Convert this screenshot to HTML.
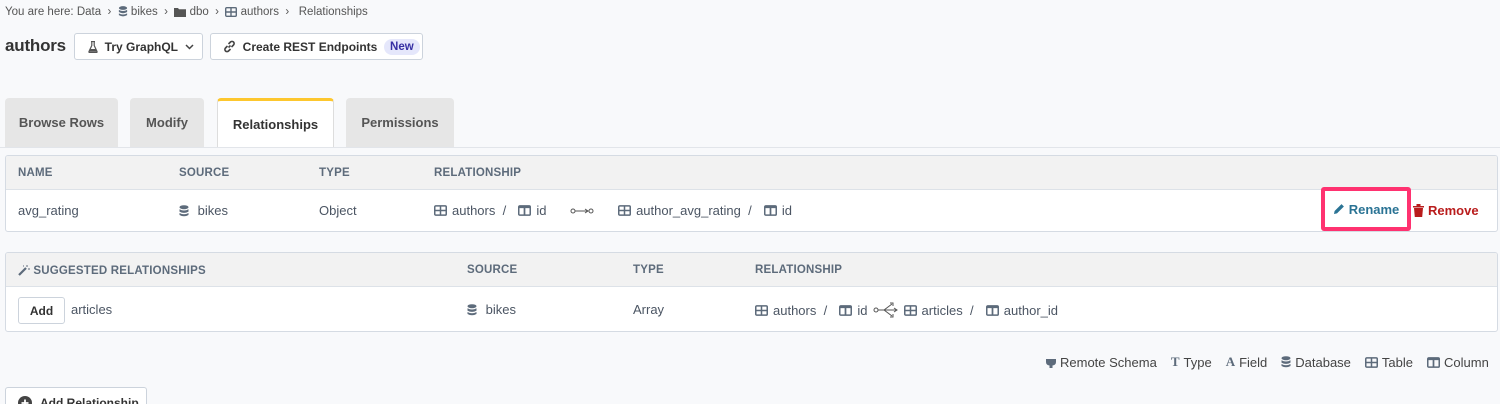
<!DOCTYPE html>
<html style="height:404px;overflow:hidden"><head><style>
*{box-sizing:border-box;margin:0;padding:0}
body{width:1500px;height:404px;overflow:hidden;background:#f8f9fb;font-family:"Liberation Sans",sans-serif;color:#4b5563;position:relative}
.a{position:absolute;white-space:nowrap}
.bc{font-size:11.5px;color:#555;top:6px;left:5px}
.btn{position:absolute;background:#fff;border:1px solid #ccd3dc;border-radius:3px;font-size:12px;font-weight:bold;color:#333;display:flex;align-items:center}
.tab{position:absolute;top:98px;height:49px;background:#e6e6e6;border-radius:4px 4px 0 0;font-size:13px;font-weight:bold;color:#555;display:flex;align-items:center;justify-content:center}
.tbl{position:absolute;left:5px;width:1493px;border:1px solid #d5dbe3;border-radius:3px;background:#fff;overflow:hidden}
.hd{background:#f2f2f2;border-bottom:1px solid #dde2e8;height:34px;position:relative}
.h{position:absolute;top:11px;font-size:11.5px;font-weight:bold;color:#5d6b7b;letter-spacing:.2px}
.c{position:absolute;font-size:13px;color:#4b5563;display:flex;align-items:center;gap:5px}
.ic{display:inline-block;vertical-align:middle}
.lg{font-size:13px;color:#444;display:flex;align-items:center;gap:4px}
</style></head><body>
<svg width="0" height="0" style="position:absolute"><defs>
<symbol id="tb" viewBox="0 0 12 10"><rect x=".7" y=".7" width="10.6" height="8.6" rx="1" fill="none" stroke="#5d6b7b" stroke-width="1.4"/><path d="M1 5h10M6 1v8" stroke="#5d6b7b" stroke-width="1.4"/></symbol>
<symbol id="col" viewBox="0 0 12 10"><rect x=".7" y=".7" width="10.6" height="8.6" rx="1" fill="none" stroke="#5d6b7b" stroke-width="1.4"/><path d="M6 1v8M1 2h10" stroke="#5d6b7b" stroke-width="1.6"/></symbol>
<symbol id="db" viewBox="0 0 10 12"><ellipse cx="5" cy="2.2" rx="4.5" ry="2" fill="#5d6b7b"/><path d="M.5 4.2q4.5 2.6 9 0v2.4q-4.5 2.6-9 0zM.5 8q4.5 2.6 9 0v2q-4.5 2.6-9 0z" fill="#5d6b7b"/></symbol>
</defs></svg>

<div class="a bc">You are here: Data &nbsp;›&nbsp; <svg class="ic" width="10" height="11"><use href="#db"/></svg> bikes &nbsp;›&nbsp; <svg class="ic" width="12" height="10" viewBox="0 0 12 10"><path d="M0 1h4l1 1.3h7V10H0z" fill="#555"/></svg> dbo &nbsp;›&nbsp; <svg class="ic" width="12" height="10"><use href="#tb"/></svg> authors &nbsp;›&nbsp;&nbsp; Relationships</div>
<div class="a" style="left:5px;top:36px;font-size:17px;font-weight:bold;color:#333;letter-spacing:-.2px">authors</div>
<div class="btn" style="left:74px;top:33px;width:129px;height:27px;padding-left:13px"><svg width="10" height="12" viewBox="0 0 10 12"><path d="M3 .5h4M3.8 1v3.5L1 10.5q-.3 1 .7 1h6.6q1 0 .7-1L6.2 4.5V1" fill="none" stroke="#555" stroke-width="1.2"/><path d="M2.3 8h5.4l1 2.7H1.3z" fill="#555"/></svg>&nbsp;&nbsp;Try GraphQL&nbsp;&nbsp;<svg width="9" height="6" viewBox="0 0 9 6"><path d="M1 1l3.5 3.5L8 1" fill="none" stroke="#444" stroke-width="1.5"/></svg></div>
<div class="btn" style="left:210px;top:33px;width:213px;height:27px;padding-left:12px"><svg width="13" height="13" viewBox="0 0 13 13"><path d="M5.5 7.5l2-2M4.5 6L2.5 8a2 2 0 003 3l2-2M8.5 7l2-2a2 2 0 00-3-3l-2 2" fill="none" stroke="#444" stroke-width="1.6"/></svg>&nbsp;&nbsp;Create REST Endpoints&nbsp;&nbsp;<span style="background:#e5e7fb;color:#3730a3;border-radius:9px;padding:2px 6px;font-size:11.5px">New</span></div>

<div class="tab" style="left:5px;width:113px">Browse Rows</div>
<div class="tab" style="left:130px;width:74px">Modify</div>
<div class="tab" style="left:217px;width:117px;background:#fff;border:1px solid #ddd;border-top:3px solid #fdc72e;border-bottom:none;color:#333;height:50px">Relationships</div>
<div class="tab" style="left:346px;width:108px">Permissions</div>
<div class="a" style="left:0;top:147px;width:1500px;height:1px;background:#e2e5ea"></div>

<div class="tbl" style="top:155px;height:77px">
<div class="hd"><span class="h" style="left:12px">NAME</span><span class="h" style="left:173px">SOURCE</span><span class="h" style="left:313px">TYPE</span><span class="h" style="left:428px">RELATIONSHIP</span></div>
<div class="c" style="left:12px;top:47px">avg_rating</div>
<div class="c" style="left:173px;top:47px"><svg width="10" height="12"><use href="#db"/></svg>&nbsp;bikes</div>
<div class="c" style="left:313px;top:47px">Object</div>
<div class="c" style="left:428px;top:47px"><svg width="13" height="11"><use href="#tb"/></svg>authors&nbsp;&nbsp;/&nbsp;&nbsp;<svg width="13" height="11"><use href="#col"/></svg>id&nbsp;&nbsp;&nbsp;&nbsp;&nbsp;<svg width="24" height="8" viewBox="0 0 24 8"><circle cx="3" cy="4" r="2" fill="none" stroke="#555"/><path d="M5 4h13M15 2l3 2-3 2" fill="none" stroke="#555"/><circle cx="21" cy="4" r="2" fill="none" stroke="#555"/></svg>&nbsp;&nbsp;&nbsp;&nbsp;<svg width="13" height="11"><use href="#tb"/></svg>author_avg_rating&nbsp;&nbsp;/&nbsp;&nbsp;<svg width="13" height="11"><use href="#col"/></svg>id</div>
<div class="a" style="left:1407px;top:47px;font-size:13px;font-weight:bold;color:#b91c1c;display:flex;align-items:center;gap:4px"><svg width="11" height="13" viewBox="0 0 11 13"><path d="M0 2h11v1.5H0zM3.5 0h4v2h-4zM1 4h9l-.8 9H1.8z" fill="#b91c1c"/></svg>Remove</div>
</div>
<div class="a" style="left:1321px;top:187px;width:90px;height:44px;border:4px solid #ff3270;border-radius:3px;background:#fff;display:flex;align-items:center;justify-content:center;gap:4px;font-size:13px;font-weight:bold;color:#2a7394"><svg width="12" height="12" viewBox="0 0 12 12"><path d="M1 11l.6-3L8.5 1.1l2.4 2.4L4 10.4z" fill="#2a7394"/></svg>Rename</div>

<div class="tbl" style="top:252px;height:80px">
<div class="hd"><span class="h" style="left:12px"><svg width="12" height="12" viewBox="0 0 12 12" style="vertical-align:-2px"><path d="M1 11L8 4" stroke="#5d6b7b" stroke-width="2.2"/><path d="M9 1v2M10 5h2M5 2h1" stroke="#5d6b7b" stroke-width="1"/></svg> SUGGESTED RELATIONSHIPS</span><span class="h" style="left:461px">SOURCE</span><span class="h" style="left:627px">TYPE</span><span class="h" style="left:749px">RELATIONSHIP</span></div>
<div class="a" style="left:12px;top:44px;width:47px;height:27px;border:1px solid #ccd3dc;border-radius:3px;font-size:12px;font-weight:bold;color:#333;display:flex;align-items:center;justify-content:center">Add</div>
<div class="c" style="left:65px;top:49px">articles</div>
<div class="c" style="left:461px;top:49px"><svg width="10" height="12"><use href="#db"/></svg>&nbsp;bikes</div>
<div class="c" style="left:627px;top:49px">Array</div>
<div class="c" style="left:749px;top:49px"><svg width="13" height="11"><use href="#tb"/></svg>authors&nbsp;&nbsp;/&nbsp;&nbsp;<svg width="13" height="11"><use href="#col"/></svg>id<svg width="26" height="16" viewBox="0 0 26 16"><circle cx="3" cy="8" r="2" fill="none" stroke="#555"/><path d="M5 8h6l8-6M11 8h13M11 8l8 6M17 1h3v3M21 6l3 2-3 2M17 15h3v-3" fill="none" stroke="#555"/></svg><svg width="13" height="11"><use href="#tb"/></svg>articles&nbsp;&nbsp;/&nbsp;&nbsp;<svg width="13" height="11"><use href="#col"/></svg>author_id</div>
</div>

<div class="a" style="left:1046px;top:354px;display:flex;gap:14px">
<span class="lg"><svg width="10" height="12" viewBox="0 0 10 12"><path d="M2 0v3M8 0v3M0 3h10v3q0 3-3.5 3.5V12h-3V9.5Q0 9 0 6z" fill="#5d6b7b"/></svg>Remote Schema</span>
<span class="lg"><b style="color:#5d6b7b;font-family:'Liberation Serif'">T</b>Type</span>
<span class="lg"><b style="color:#5d6b7b;font-family:'Liberation Serif'">A</b>Field</span>
<span class="lg"><svg width="10" height="12"><use href="#db"/></svg>Database</span>
<span class="lg"><svg width="13" height="11"><use href="#tb"/></svg>Table</span>
<span class="lg"><svg width="13" height="11"><use href="#col"/></svg>Column</span>
</div>

<div class="a" style="left:5px;top:387px;width:142px;height:17px;overflow:hidden;background:#fff;border:1px solid #ccd3dc;border-bottom:none;border-radius:3px 3px 0 0;font-size:12px;font-weight:bold;color:#333;padding:8px 0 0 12px;display:flex;gap:8px;align-items:flex-start"><svg width="14" height="14" viewBox="0 0 14 14"><circle cx="7" cy="7" r="7" fill="#444"/><path d="M7 3.5v7M3.5 7h7" stroke="#fff" stroke-width="1.8"/></svg>Add Relationship</div>
</body></html>
